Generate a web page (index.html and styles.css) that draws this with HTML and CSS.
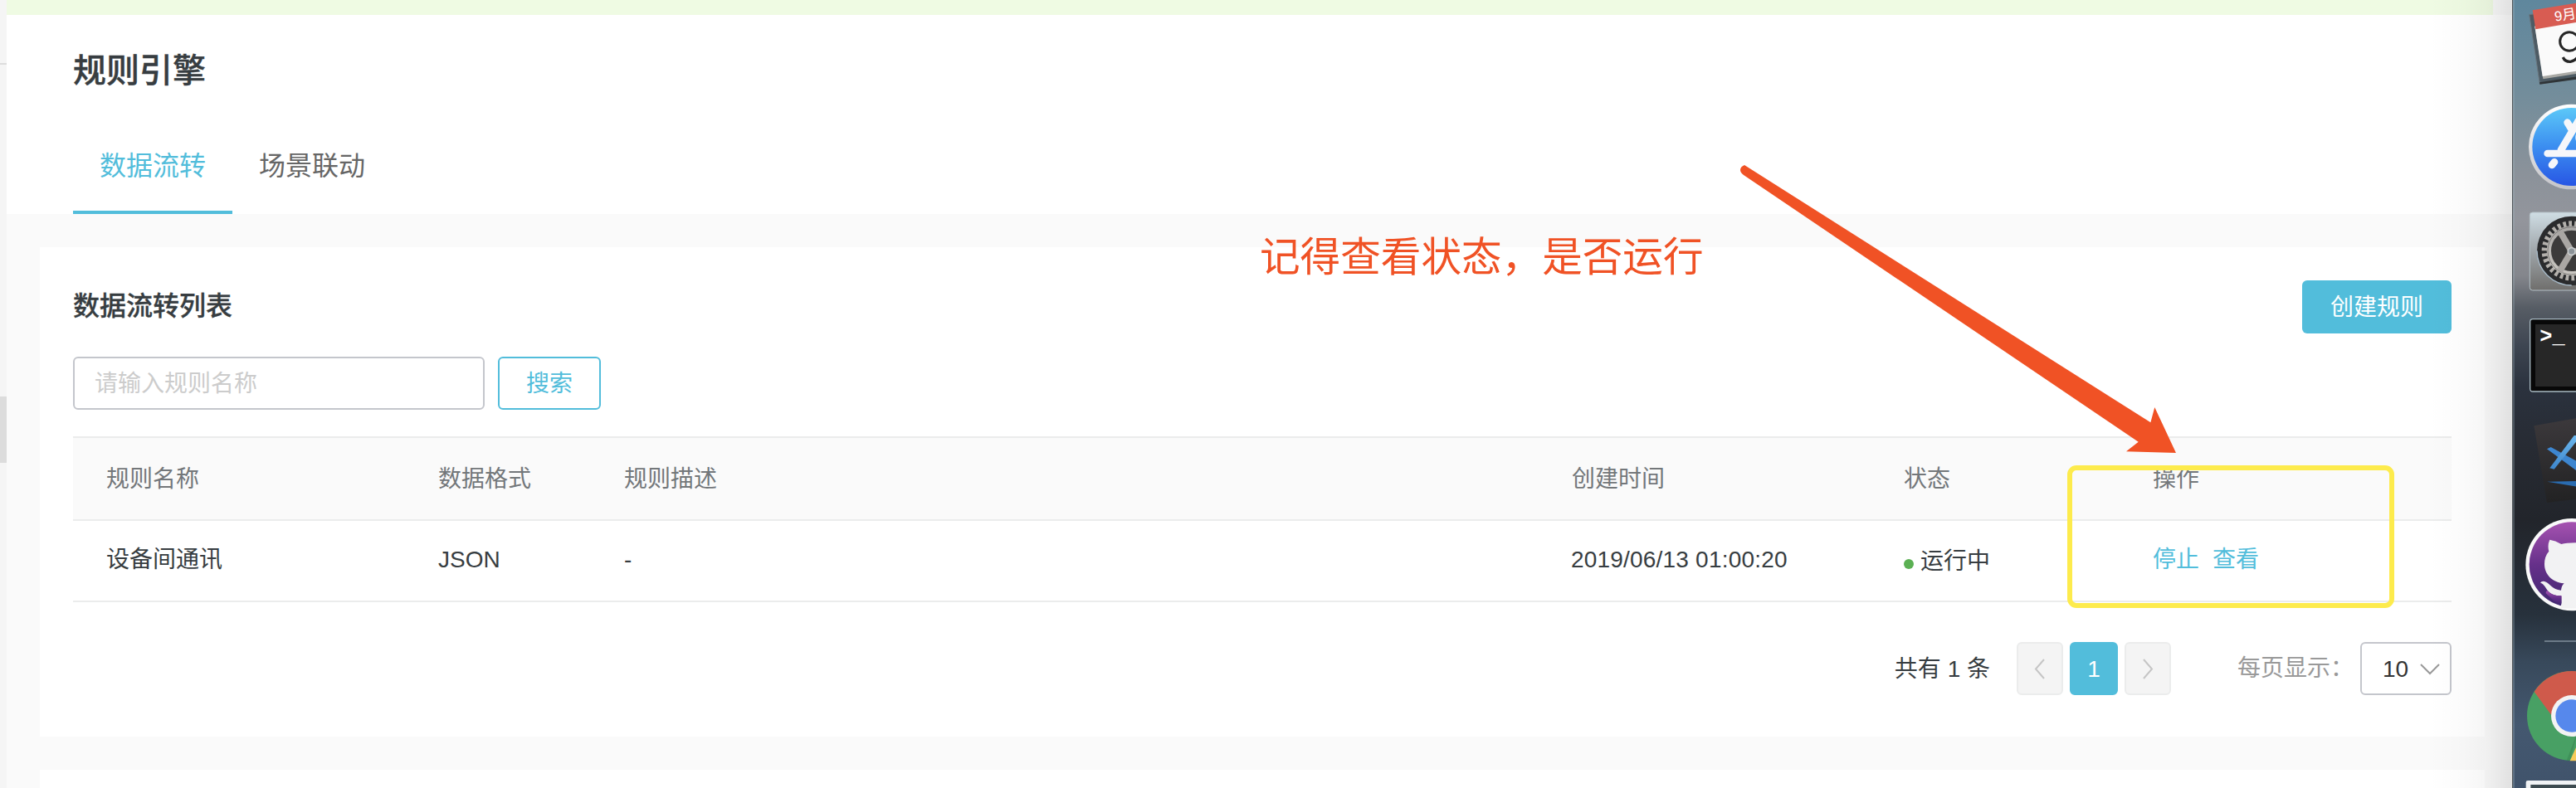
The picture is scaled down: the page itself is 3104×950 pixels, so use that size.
FILE: index.html
```html
<!DOCTYPE html>
<html lang="zh-CN">
<head>
<meta charset="utf-8">
<title>规则引擎</title>
<link rel="stylesheet" href="styles.css">
</head>
<body>
<div class="screen">
  <aside class="rail"><i class="rail-line"></i><i class="rail-thumb"></i></aside>
  <main class="main">
    <div class="notice"></div>
    <header class="header">
      <h1 class="title">规则引擎</h1>
      <nav class="tabs">
        <a class="tab tab-active">数据流转</a>
        <a class="tab">场景联动</a>
      </nav>
    </header>
    <section class="card">
      <div class="card-head">
        <h2 class="card-title">数据流转列表</h2>
        <button class="btn btn-primary">创建规则</button>
      </div>
      <div class="search">
        <input class="input" placeholder="请输入规则名称">
        <button class="btn btn-outline">搜索</button>
      </div>
      <div class="table">
        <div class="row row-head">
          <span>规则名称</span><span>数据格式</span><span>规则描述</span><span>创建时间</span><span>状态</span><span>操作</span>
        </div>
        <div class="row">
          <span>设备间通讯</span><span>JSON</span><span>-</span><span class="time">2019/06/13 01:00:20</span>
          <span class="status"><i class="dot"></i>运行中</span>
          <span class="actions"><a>停止</a><a>查看</a></span>
        </div>
      </div>
      <div class="pager">
        <span class="total">共有 1 条</span>
        <button class="page page-off"><svg width="16" height="26" viewBox="0 0 16 26"><path d="M13 2L3 13.500l10 11.500"/></svg></button>
        <button class="page page-on">1</button>
        <button class="page page-off"><svg width="16" height="26" viewBox="0 0 16 26"><path d="M3 2l10 11.500L3 25"/></svg></button>
        <span class="size-label">每页显示：</span>
        <div class="select">10<svg width="26" height="16" viewBox="0 0 26 16"><path d="M2 2l11 11L24 2"/></svg></div>
      </div>
    </section>
    <section class="card-next"></section>
  </main>
  <div class="shade"></div>
  <aside class="dock">
    <svg width="77" height="950" viewBox="201 0 231 2850">
      <defs>
        <linearGradient id="app" x1="0" y1="0" x2="0" y2="1"><stop offset="0" stop-color="#5cc8f8"/><stop offset=".5" stop-color="#3b8df0"/><stop offset="1" stop-color="#2856e4"/></linearGradient>
        <linearGradient id="metal" x1="0" y1="0" x2="0" y2="1"><stop offset="0" stop-color="#cfdde4"/><stop offset=".5" stop-color="#9fa5a9"/><stop offset="1" stop-color="#6f6e6c"/></linearGradient>
        <linearGradient id="gear" x1="0" y1="0" x2="0" y2="1"><stop offset="0" stop-color="#aaa8a6"/><stop offset="1" stop-color="#c8c5c0"/></linearGradient>
        <linearGradient id="ring" x1="0" y1="0" x2="0" y2="1"><stop offset="0" stop-color="#fff"/><stop offset="1" stop-color="#c4c4c8"/></linearGradient>
        <linearGradient id="plum" x1="0" y1="0" x2="0" y2="1"><stop offset="0" stop-color="#a552b0"/><stop offset=".5" stop-color="#66308a"/><stop offset="1" stop-color="#402870"/></linearGradient>
        <linearGradient id="code" x1="0" y1="0" x2="0" y2="1"><stop offset="0" stop-color="#3c393c"/><stop offset="1" stop-color="#222223"/></linearGradient>
        <linearGradient id="blue" x1="0" y1="0" x2="0" y2="1"><stop offset="0" stop-color="#6db8ee"/><stop offset="1" stop-color="#3d86cc"/></linearGradient>
      </defs>
      <path fill="#4d5b64" stroke="#6b7880" stroke-width="3" d="M263 53L301 303L440 284V30z"/>
      <path fill="#2f3437" d="M300 298L440 276V286L301 305z"/>
      <path fill="#a9a9a5" d="M283 95L313 286L440 266V60z"/>
      <path fill="#fafafa" d="M283 95L311 276L440 256V60z"/>
      <path fill="#d85c52" d="M275 37L440 10V80L286 106z"/>
      <text class="cal-month" x="357" y="77" transform="rotate(-9 357 77)">9月</text>
      <circle cx="408" cy="150" r="34" fill="none" stroke="#262626" stroke-width="9"/>
      <path fill="none" stroke="#262626" stroke-width="10" d="M385 207Q392 224 412 223Q428 221 440 204"/>
      <circle cx="415" cy="531" r="154" fill="url(#ring)"/>
      <circle cx="415" cy="531" r="141" fill="url(#app)"/>
      <g fill="none" stroke="#f6f7fa" stroke-linecap="round" stroke-width="26">
        <path d="M329 555H440M378 542L440 438M401 443L416 468M354 586L345 597"/>
        <path stroke-width="12" d="M440 482q-8 16 0 30"/>
      </g>
      <rect x="265" y="768" width="190" height="282" rx="10" fill="url(#metal)" stroke="#b4c0c6" stroke-width="3"/>
      <circle cx="416" cy="907" r="125" fill="#2a2b2d"/>
      <path d="M291 907A125 125 0 0 0 416 1032" fill="none" stroke="#a8bac8" stroke-width="4"/>
      <circle cx="416" cy="907" r="98" fill="none" stroke="#b3b0ac" stroke-width="20" stroke-dasharray="11 9.5"/>
      <circle cx="416" cy="907" r="82" fill="#3c3b3b" stroke="url(#gear)" stroke-width="16"/>
      <circle cx="416" cy="907" r="86" fill="none" stroke="#7b7977" stroke-width="3"/>
      <path stroke="#aaa7a4" stroke-width="23" d="M416 909L373 835M416 909L373 981M416 909H440"/>
      <circle cx="416" cy="909" r="13" fill="#8d9499" stroke="#c9cccd" stroke-width="5"/>
      <rect x="266" y="1154" width="190" height="262" rx="10" fill="#080808" stroke="#a9bac2" stroke-width="4"/>
      <rect x="285" y="1173" width="160" height="225" fill="#272727"/>
      <text class="prompt" x="301" y="1239">&gt;_</text>
      <path fill="url(#code)" d="M280 1540L440 1511V1804L327 1818z"/>
      <path fill="#3d86d0" d="M327 1624l14-7 99 54v36z"/>
      <path fill="url(#blue)" d="M337 1693L425 1575H440V1588L353 1697z"/>
      <path fill="#2a6cb0" d="M328 1742L440 1740V1761z"/>
      <circle cx="417" cy="2042" r="167" fill="#fafafa"/>
      <circle cx="417" cy="2042" r="154" fill="url(#plum)"/>
      <path fill="#f2f2f3" d="M337 1952Q357 1955 379 1968Q400 1962 440 1963V2200H378V2155C340 2156 329 2137 320 2122Q313 2110 303 2108Q309 2099 324 2105C338 2111 345 2131 378 2135Q380 2117 389 2110C344 2106 318 2076 318 2040Q318 2012 334 1994Q328 1971 337 1952z"/>
      <path fill="url(#plum)" d="M323 2146Q345 2170 372 2188Q380 2190 380 2180V2155Q345 2156 329 2137Q322 2138 323 2146z"/>
      <path stroke="#82909c" stroke-width="5" d="M318 2319H440"/>
      <circle cx="417" cy="2589" r="162" fill="#48a064"/>
      <path fill="#cf5a4b" d="M281 2502A162 162 0 0 1 440 2429V2589H345z"/>
      <path fill="#36814d" d="M440 2640L411 2751H398L432 2660z" opacity=".5"/>
      <path fill="#f6cb58" d="M410 2752L440 2686V2752z"/>
      <circle cx="417" cy="2589" r="75" fill="#f3f3f3"/>
      <circle cx="417" cy="2589" r="59" fill="#5688ec"/>
      <path fill="#3d4b50" d="M266 2836H440V2850H266z"/>
      <path fill="#f1f3f5" d="M251 2850V2829Q251 2823 258 2823H440V2838H268V2850z"/>
    </svg>
  </aside>
  <div class="callout">记得查看状态，是否运行</div>
  <svg class="arrow" width="540" height="360" viewBox="2090 190 540 360"><path d="M2102 199Q2097 201 2097 205Q2097 208 2101 211L2576.7 532.7L2562 544.3L2622 546L2596.3 491L2591.4 509.3z"/></svg>
  <div class="highlight"></div>
</div>
</body>
</html>
```
FILE: styles.css
```css
* { box-sizing: border-box; }
body {
  margin: 0;
  background: #fafafa;
  color: #373d41;
  font: 28px/40px "Liberation Sans", "Noto Sans CJK SC", sans-serif;
}
h1, h2 { margin: 0; }
button, input { font: inherit; margin: 0; }

.screen { position: relative; display: flex; width: 3104px; height: 950px; overflow: hidden; }
.rail { width: 8px; background: #f5f5f5; display: flex; flex-direction: column; }
.rail-line { height: 2px; margin-top: 76px; background: #ddd; }
.rail-thumb { height: 80px; margin-top: 400px; background: #dcdcdc; }
.main { width: 3019px; display: flex; flex-direction: column; }
.notice { width: 2996px; height: 18px; background: #effbe3; }

.header { height: 240px; padding: 37px 80px 0; background: #fff; }
.title { font-size: 40px; line-height: 60px; font-weight: 500; -webkit-text-stroke: .4px; }
.tabs { display: flex; height: 116px; margin-top: 27px; }
.tab { padding: 14px 32px 0; font-size: 32px; line-height: 88px; color: #666; height: 116px; }
.tab-active { color: #52bddb; border-bottom: 4px solid #52bddb; }

.card { width: 2946px; height: 590px; margin: 40px 0 0 40px; padding: 40px 40px 0; background: #fff; }
.card-head { display: flex; justify-content: space-between; height: 64px; }
.card-title { font-size: 32px; line-height: 63px; font-weight: 500; -webkit-text-stroke: .3px; }
.btn { height: 64px; border-radius: 6px; padding: 2px 0 0; line-height: 58px; }
.btn-primary { width: 180px; border: 0; background: #52bddb; color: #fff; }
.btn-outline { width: 124px; border: 2px solid #52bddb; background: #fff; color: #52bddb; }
.search { display: flex; gap: 16px; margin-top: 28px; }
.input { width: 496px; height: 64px; padding: 2px 24px 0; border: 2px solid #c4c6cc; border-radius: 6px; background: #fff; }
.input::placeholder { color: #ccc; opacity: 1; }

.table { margin-top: 32px; border-top: 2px solid #ebecec; }
.row { display: grid; grid-template-columns: 400px 224px 1142px 400px 300px 1fr; padding-left: 40px; height: 98px; line-height: 94px; border-bottom: 2px solid #ebecec; }
.row-head { height: 100px; line-height: 100px; background: #fafafa; color: #73777a; }
.time { letter-spacing: .2px; margin-left: -1px; }
.status { display: flex; align-items: center; gap: 8px; padding-top: 2px; }
.dot { width: 12px; height: 12px; margin-top: 6px; border-radius: 50%; background: #5bb053; }
.actions { display: flex; gap: 16px; color: #52bddb; }

.pager { display: flex; justify-content: flex-end; align-items: center; margin-top: 48px; height: 64px; }
.total { margin-right: 32px; padding-top: 2px; }
.page { height: 64px; width: 56px; padding: 0; border: 2px solid #ebecec; border-radius: 6px; background: #f4f4f4; display: flex; align-items: center; justify-content: center; }
.page-on { width: 58px; margin: 0 8px; padding-top: 2px; background: #52bddb; border-color: #52bddb; color: #fff; }
.pager svg { fill: none; stroke: #c5c5c5; stroke-width: 2; }
.size-label { margin-left: 80px; width: 148px; color: #999; white-space: nowrap; }
.select { width: 110px; height: 64px; padding: 1px 11px 0 25px; border: 2px solid #c4c6cc; border-radius: 6px; display: flex; align-items: center; justify-content: space-between; color: #333; }
.select svg { stroke: #999; }
.card-next { width: 2946px; height: 22px; margin: 40px 0 0 40px; background: #fff; }

/* Shadow cast by the dock over the page edge */
.shade { position: absolute; left: 2927px; top: 0; width: 100px; height: 950px; background: linear-gradient(90deg, transparent, rgba(0,0,0,.015) 40%, rgba(0,0,0,.04) 70%, rgba(0,0,0,.1)); }
.dock {
  width: 77px;
  height: 950px;
  box-shadow: inset 1px 0 #50565a, inset 3px 0 rgba(160,180,190,.3);
  background: linear-gradient(#5f879d, #738d9b 12%, #8b929a 22%, #93959c 28%, #84868c 35%, #575d65 39%, #3d4551 44%, #2b323e 49%, #272b33 57%, #22252b 66%, #27313c 78%, #38495b 84%, #445870 92%, #40536b);
}
.dock svg { display: block; }
.cal-month { font: 50px "Liberation Sans", "Noto Sans CJK SC", sans-serif; fill: #fff; }
.prompt { font: bold 76px "Liberation Mono", monospace; fill: #fff; }

/* Annotations laid over the page */
.callout { position: absolute; left: 1518px; top: 274px; color: #f05225; font-size: 48.6px; line-height: 72px; white-space: nowrap; }
.arrow { position: absolute; left: 2090px; top: 190px; fill: #f05225; }
.highlight { position: absolute; left: 2491px; top: 561px; width: 394px; height: 172px; border: 6px solid #fdeb4c; border-radius: 11px; }
```
